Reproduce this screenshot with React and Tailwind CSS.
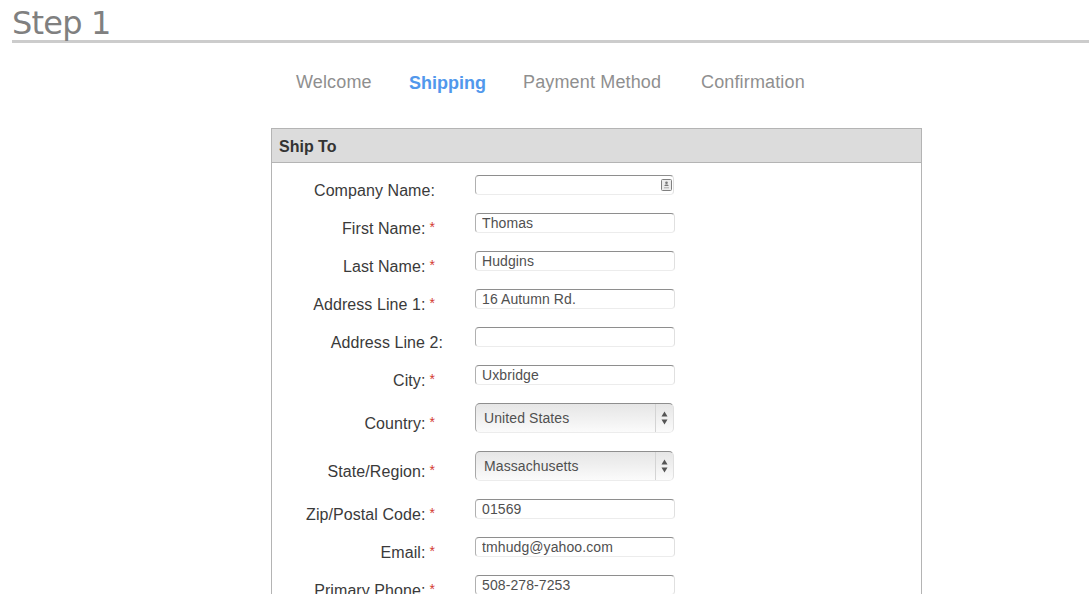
import React from 'react';

const steps = [
  { label: 'Welcome', w: 'w-[113px]' },
  { label: 'Shipping', w: 'w-[114px]', active: true },
  { label: 'Payment Method', w: 'w-[178px]' },
  { label: 'Confirmation', w: 'w-auto' },
];

const inputBorder = 'rounded-[4px] border border-[#e0e0e0] border-t-[#8e8e8e] border-l-[#b0b0b0] border-b-[#ececec]';

const Star = () => (
  <span className="relative -top-[2px] ml-[4px] text-[14px] text-[#d33a32]">*</span>
);

const Field = ({ label, required, value, wide, children }) => (
  <div className="flex h-[20px] mb-[18px]">
    <label className={`shrink-0 text-right text-[16px] leading-[20px] tracking-[0.07px] text-[#3a3a3a] pt-[6px] h-[26px] whitespace-nowrap ${wide ? 'w-[171px] mr-[32px]' : 'w-[163px] mr-[40px]'}`}>
      {label}
      {required && <Star />}
    </label>
    {children || (
      <input
        defaultValue={value}
        className={`block w-[200px] h-[20px] ${inputBorder} px-[6px] text-[14px] leading-[18px] tracking-[0.1px] text-[#505050] outline-none`}
      />
    )}
  </div>
);

const SelectField = ({ label, value }) => (
  <div className="flex h-[30px] mb-[18px]">
    <label className="shrink-0 w-[163px] mr-[40px] text-right text-[16px] leading-[20px] tracking-[0.07px] text-[#3a3a3a] pt-[11px] h-[31px] whitespace-nowrap">
      {label}
      <Star />
    </label>
    <div className="flex w-[199px] h-[30px] rounded-[5px] border-t border-t-[#8e8e8e] border-l border-l-[#a8a8a8] border-r border-r-[#e0e0e0] border-b border-b-[#ececec] bg-gradient-to-b from-[#e6e6e6] via-[#f0f0f0] to-[#fbfbfb] text-[14px] tracking-[0.1px] text-[#505050]">
      <span className="flex-1 pl-[8px] leading-[28px]">{value}</span>
      <span className="flex w-[18px] items-center justify-center border-l border-l-[#d4d4d4]">
        <svg width="7" height="14" viewBox="0 0 7 14">
          <path d="M3.5 0.5L6.5 5.5H0.5Z" fill="#555" />
          <path d="M3.5 13.5L0.5 8.5H6.5Z" fill="#555" />
        </svg>
      </span>
    </div>
  </div>
);

export default function App() {
  return (
    <div className="h-[594px] overflow-hidden bg-white font-['Liberation_Sans',Arial,sans-serif]">
      {/* Title */}
      <h1 className="ml-[12px] h-[43px] border-b-[3px] border-[#cccccc] pt-[5px] font-['DejaVu_Sans',sans-serif] text-[32px] leading-[37px] tracking-[-0.8px] text-[#808080]">
        Step 1
      </h1>

      {/* Steps */}
      <ul className="flex pl-[296px] pt-[28px] h-[85px] text-[18px] leading-[22px] tracking-[0.15px] text-[#8f8f8f]">
        {steps.map((s) => (
          <li key={s.label} className={`${s.w} ${s.active ? 'font-bold tracking-normal text-[#5198ec] pt-[1px]' : ''}`}>
            {s.label}
          </li>
        ))}
      </ul>

      {/* Ship To panel */}
      <section className="ml-[271px] w-[651px] border border-[#b4b4b4]">
        <h2 className="h-[34px] border-b border-[#b4b4b4] bg-[#dcdcdc] pl-[7px] pt-[1px] text-[16px] font-bold leading-[34px] text-[#333]">
          Ship To
        </h2>
        <div className="pt-[12px]">
          <Field label="Company Name:">
            <div className="relative w-[200px] h-[20px]">
              <input className={`block w-[199px] h-[20px] ${inputBorder} outline-none`} />
              <svg className="absolute right-[3px] top-[4px]" width="11" height="12" viewBox="0 0 11 12">
                <rect x="0.5" y="0.5" width="10" height="11" rx="1" fill="#ececec" stroke="#808080" />
                <circle cx="5.5" cy="3.8" r="1.3" fill="#777" />
                <path d="M3.5 7h4V6.2L6.5 5.4h-2L3.5 6.2Z" fill="#777" />
                <path d="M3 8.8h5" stroke="#aaa" />
              </svg>
            </div>
          </Field>
          <Field label="First Name:" required value="Thomas" />
          <Field label="Last Name:" required value="Hudgins" />
          <Field label="Address Line 1:" required value="16 Autumn Rd." />
          <Field label="Address Line 2:" wide value="" />
          <Field label="City:" required value="Uxbridge" />
          <SelectField label="Country:" value="United States" />
          <SelectField label="State/Region:" value="Massachusetts" />
          <Field label="Zip/Postal Code:" required value="01569" />
          <Field label="Email:" required value="tmhudg@yahoo.com" />
          <Field label="Primary Phone:" required value="508-278-7253" />
        </div>
      </section>
    </div>
  );
}
